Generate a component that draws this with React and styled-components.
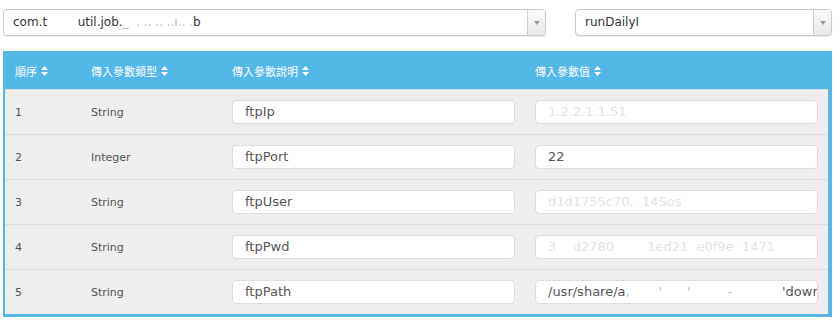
import styled, { createGlobalStyle } from 'styled-components'

const Global = createGlobalStyle`
  body {
    margin: 0;
    background: #fff;
    font-family: "DejaVu Sans", "Noto Sans CJK TC", sans-serif;
  }
`

const Page = styled.div`
  padding: 9px 8px 0 3px;
`

const SelectRow = styled.div`
  display: flex;
  gap: 29px;
`

const Select = styled.div`
  display: flex;
  width: ${p => p.width}px;
  height: 27px;
  box-sizing: border-box;
  border: 1px solid #c8c8c8;
  border-radius: 4px;
  background: #fff;
  box-shadow: 0 1px 1px rgba(0, 0, 0, 0.08);
  overflow: hidden;
`

const SelectText = styled.div`
  flex: 1;
  padding-left: 9px;
  font-size: 12px;
  line-height: 25px;
  color: #333;
  white-space: pre;
`

const Arrow = styled.div`
  width: 17px;
  border-left: 1px solid #d0d0d0;
  background: linear-gradient(#fbfbfb, #e6e6e6);
  display: flex;
  align-items: center;
  justify-content: center;
`

const Faint = styled.span`
  color: ${p => p.light ? '#e4e4e4' : '#bbb'};
`

const Table = styled.div`
  margin-top: 15px;
  border: 2px solid #53b8e8;
  border-right-width: 4px;
  border-bottom-width: 3px;
  background: #eee;
`

const Header = styled.div`
  display: grid;
  grid-template-columns: 76px 141px 303px 1fr;
  padding-left: 10px;
  height: 36px;
  align-items: center;
  background: #53b8e8;
  color: #fff;
  font-size: 11px;
  font-family: "Noto Sans CJK TC", "DejaVu Sans", sans-serif;
`

const HeadCell = styled.div`
  display: flex;
  align-items: center;
  gap: 4px;
`

const Row = styled.div`
  display: grid;
  grid-template-columns: 76px 141px 303px 1fr;
  padding-left: 10px;
  height: 45px;
  box-sizing: border-box;
  align-items: center;
  border-top: 1px solid #dcdcdc;
  font-size: 11px;
  color: #555;
  &:first-of-type {
    border-top-color: #d6e6ee;
  }
`

const Input = styled.div`
  width: 283px;
  height: 24px;
  box-sizing: border-box;
  border: 1px solid #dcdcdc;
  border-radius: 4px;
  background: #fff;
  padding-left: 12px;
  font-size: 13px;
  line-height: 22px;
  color: #555;
  white-space: pre;
  overflow: hidden;
`

const SortIcon = () => (
  <svg width="7" height="10" viewBox="0 0 7 10">
    <path d="M3.5 0 L7 4 H0 Z M3.5 10 L7 6 H0 Z" fill="#fff" />
  </svg>
)

const Caret = () => (
  <svg width="6" height="4" viewBox="0 0 6 4">
    <path d="M0 0 H6 L3 4 Z" fill="#999" />
  </svg>
)

const rows = [
  { id: 1, type: 'String', name: 'ftpIp', value: <Faint light>1.2.2.1.1.51</Faint> },
  { id: 2, type: 'Integer', name: 'ftpPort', value: '22' },
  { id: 3, type: 'String', name: 'ftpUser', value: <Faint light>d1d1755c70.  14Sos</Faint> },
  { id: 4, type: 'String', name: 'ftpPwd', value: <Faint light>3    d2780        1ed21  e0f9e  1471</Faint> },
  {
    id: 5, type: 'String', name: 'ftpPath',
    value: <>/usr/share/a<Faint>,       '      '         -            </Faint>'dowr</>,
  },
]

const heads = ['順序', '傳入參數類型', '傳入參數說明', '傳入參數值']

const App = () => {
  return (
    <Page>
      <Global />
      <SelectRow>
        <Select width={543}>
          <SelectText>com.t<Faint light>        </Faint>util.job.<Faint>_  . .. .. ..ı.. .</Faint>b</SelectText>
          <Arrow><Caret /></Arrow>
        </Select>
        <Select width={257}>
          <SelectText>runDailyI</SelectText>
          <Arrow><Caret /></Arrow>
        </Select>
      </SelectRow>
      <Table>
        <Header>
          {heads.map(h => (
            <HeadCell key={h}>{h}<SortIcon /></HeadCell>
          ))}
        </Header>
        {rows.map(r => (
          <Row key={r.id}>
            <div>{r.id}</div>
            <div>{r.type}</div>
            <div><Input>{r.name}</Input></div>
            <div><Input>{r.value}</Input></div>
          </Row>
        ))}
      </Table>
    </Page>
  )
}

export default App
